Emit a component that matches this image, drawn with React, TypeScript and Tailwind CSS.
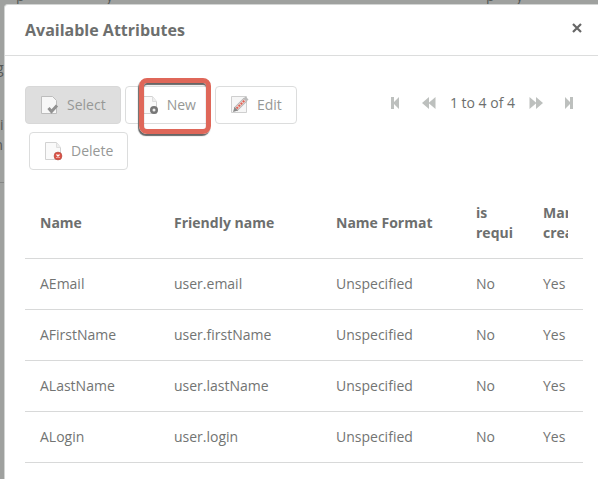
import React from "react";

const columns = [
  { title: ["Name"], width: "w-[134px]" },
  { title: ["Friendly name"], width: "w-[162px]" },
  { title: ["Name Format"], width: "w-[140px]" },
  { title: ["is", "required"], width: "w-[67px]" },
  { title: ["Mandatory", "creation"], width: "w-auto" },
];

const rows = [
  ["AEmail", "user.email", "Unspecified", "No", "Yes"],
  ["AFirstName", "user.firstName", "Unspecified", "No", "Yes"],
  ["ALastName", "user.lastName", "Unspecified", "No", "Yes"],
  ["ALogin", "user.login", "Unspecified", "No", "Yes"],
];

function Page() {
  return (
    <>
      <path d="M1.500 1.500h11l4 5v12h-15z" fill="#fafafa" stroke="#d2d2d2" />
      <path d="M12.500 1.500v5h4" fill="#eee" stroke="#dedede" />
    </>
  );
}

function SelectIcon() {
  return (
    <svg className="size-5" viewBox="0 0 20 20" aria-hidden="true">
      <path d="M1.500 1.500h11l4 4v13h-15z" fill="#f7f7f7" stroke="#bdbdbd" />
      <path d="M8.500 13l3 3.500 5.500-6" fill="none" stroke="#919191" strokeWidth="3" />
    </svg>
  );
}

function NewIcon() {
  return (
    <svg className="size-5" viewBox="0 0 20 20" aria-hidden="true">
      <Page />
      <circle cx="14" cy="15" r="4" fill="#777" />
      <circle cx="14" cy="15" r="1.500" fill="#eee" />
    </svg>
  );
}

function EditIcon() {
  return (
    <svg className="size-5" viewBox="0 0 20 20" aria-hidden="true">
      <path d="M1.500 1.500h15v16h-15z" fill="#f6f6f6" stroke="#cfcfcf" />
      <path d="M5.500 14.500L15.500 4.500" stroke="#b5b5b5" strokeWidth="5" />
      <path d="M6 14L15 5" stroke="#f3d8d4" strokeWidth="3" />
      <path d="M6.500 13.500L15 5" stroke="#de6255" strokeWidth="2" strokeDasharray="2 1" />
      <path d="M3 17l1.500-5 3.500 3.500z" fill="#888" />
      <path d="M13.500 3.500l2-2 3 3-2 2z" fill="#bbb" />
    </svg>
  );
}

function DeleteIcon() {
  return (
    <svg className="size-5" viewBox="0 0 20 20" aria-hidden="true">
      <Page />
      <circle cx="14" cy="15" r="4" fill="#db5144" stroke="#a6544c" strokeWidth="0.500" />
      <path d="M12.500 13.500l3 3M15.500 13.500l-3 3" stroke="#fff" strokeWidth="1.200" />
    </svg>
  );
}

function ToolButton({ icon, label, selected = false }: { icon: React.ReactNode; label: string; selected?: boolean }) {
  return (
    <button
      type="button"
      className={
        "flex h-[38px] items-center gap-[7px] rounded border px-3.5 text-[#969896] " +
        (selected ? "border-[#d8d8d8] bg-[#dedede]" : "border-[#dcdddd] bg-white")
      }
    >
      {icon}
      {label}
    </button>
  );
}

function PagerButton({ label, children }: { label: string; children: React.ReactNode }) {
  return (
    <button type="button" aria-label={label} className="flex h-5 w-4 items-center justify-center text-[#bdc0be]">
      <svg viewBox="0 0 14 14" className="size-3.5" fill="currentColor" aria-hidden="true">
        {children}
      </svg>
    </button>
  );
}

export default function App() {
  return (
    <div className="relative min-h-screen overflow-hidden bg-[#9fa19f] pt-1 pl-1 font-['Open_Sans','Liberation_Sans',sans-serif] text-sm leading-5 text-[#6d6f6e]">
      <div className="absolute inset-x-0 top-0 text-[#555755]" aria-hidden="true">
        <span className="absolute -top-3.5 left-4">p</span>
        <span className="absolute -top-3.5 left-[106px]">y</span>
        <span className="absolute -top-3.5 left-[486px]">p</span>
        <span className="absolute -top-3.5 left-[516px]">y</span>
      </div>
      <div className="absolute top-0 left-0 h-[183px] w-1 overflow-hidden border-b border-[#858785] text-[#555755]" aria-hidden="true">
        <span className="absolute top-[58px] -left-1">g</span>
        <span className="absolute top-[115px] left-0">i</span>
        <span className="absolute top-[135px] -left-2.5">m</span>
      </div>
      <section
        role="dialog"
        aria-labelledby="dialog-title"
        className="relative min-h-[calc(100vh-4px)] rounded-tl border-t border-l border-[#d3d5d4] bg-white"
      >
        <header className="flex h-[51px] items-center justify-between border-b border-[#dcdddd] pr-[15px] pl-5">
          <h1 id="dialog-title" className="text-base font-bold">Available Attributes</h1>
          <button type="button" aria-label="Close" className="-mt-1 flex size-3 items-center justify-center">
            <svg viewBox="0 0 12 12" className="size-3" fill="none" stroke="#666" strokeWidth="2.200" aria-hidden="true">
              <path d="M2 2l8 8M10 2l-8 8" />
            </svg>
          </button>
        </header>

        <main className="pt-[30px] pr-[15px] pl-5">
          <div className="flex items-start justify-between">
            <div className="flex w-72 flex-wrap gap-y-2">
              <ToolButton icon={<SelectIcon />} label="Select" selected />
              <div className="relative ml-1">
                <ToolButton icon={<NewIcon />} label="New" />
                <div className="pointer-events-none absolute -top-2 right-0 -bottom-2.5 left-3.5 rounded-lg border-[5px] border-[#df6759] shadow-[-1px_2px_1px_#666,inset_0_2px_1px_#666]" />
              </div>
              <div className="ml-1">
                <ToolButton icon={<EditIcon />} label="Edit" />
              </div>
              <div className="ml-1">
                <ToolButton icon={<DeleteIcon />} label="Delete" />
              </div>
            </div>
            <nav aria-label="Pages" className="mt-[7px] mr-1.5 flex items-center gap-[17px]">
              <PagerButton label="First page">
                <path d="M2 1h3v5l5-5v12l-5-5v5H2z" />
              </PagerButton>
              <div className="flex items-center gap-[13px]">
                <PagerButton label="Previous page">
                  <path d="M7 1v12L0 7zM13.500 1v12L6.500 7z" />
                </PagerButton>
                <span>1 to 4 of 4</span>
                <PagerButton label="Next page">
                  <path d="M.500 1v12l7-6zM7 1v12l7-6z" />
                </PagerButton>
              </div>
              <PagerButton label="Last page">
                <path d="M3 1v12l5-5v5h3V1H8v5z" />
              </PagerButton>
            </nav>
          </div>

          <table className="mt-[18px] w-full table-fixed border-collapse text-left">
            <thead>
              <tr className="h-[70px] border-b border-[#d8d9d9]">
                {columns.map((column) => (
                  <th key={column.title[0]} scope="col" className={"px-[15px] font-bold " + column.width}>
                    <div className="overflow-hidden whitespace-nowrap">
                      {column.title.map((line) => (
                        <span key={line} className="block">{line}</span>
                      ))}
                    </div>
                  </th>
                ))}
              </tr>
            </thead>
            <tbody className="text-[#727473]">
              {rows.map((row) => (
                <tr key={row[0]} className="h-[51px] border-b border-[#d8d9d9]">
                  {row.map((cell, i) => (
                    <td key={i} className="px-[15px]">{cell}</td>
                  ))}
                </tr>
              ))}
            </tbody>
          </table>
        </main>
      </section>
    </div>
  );
}
